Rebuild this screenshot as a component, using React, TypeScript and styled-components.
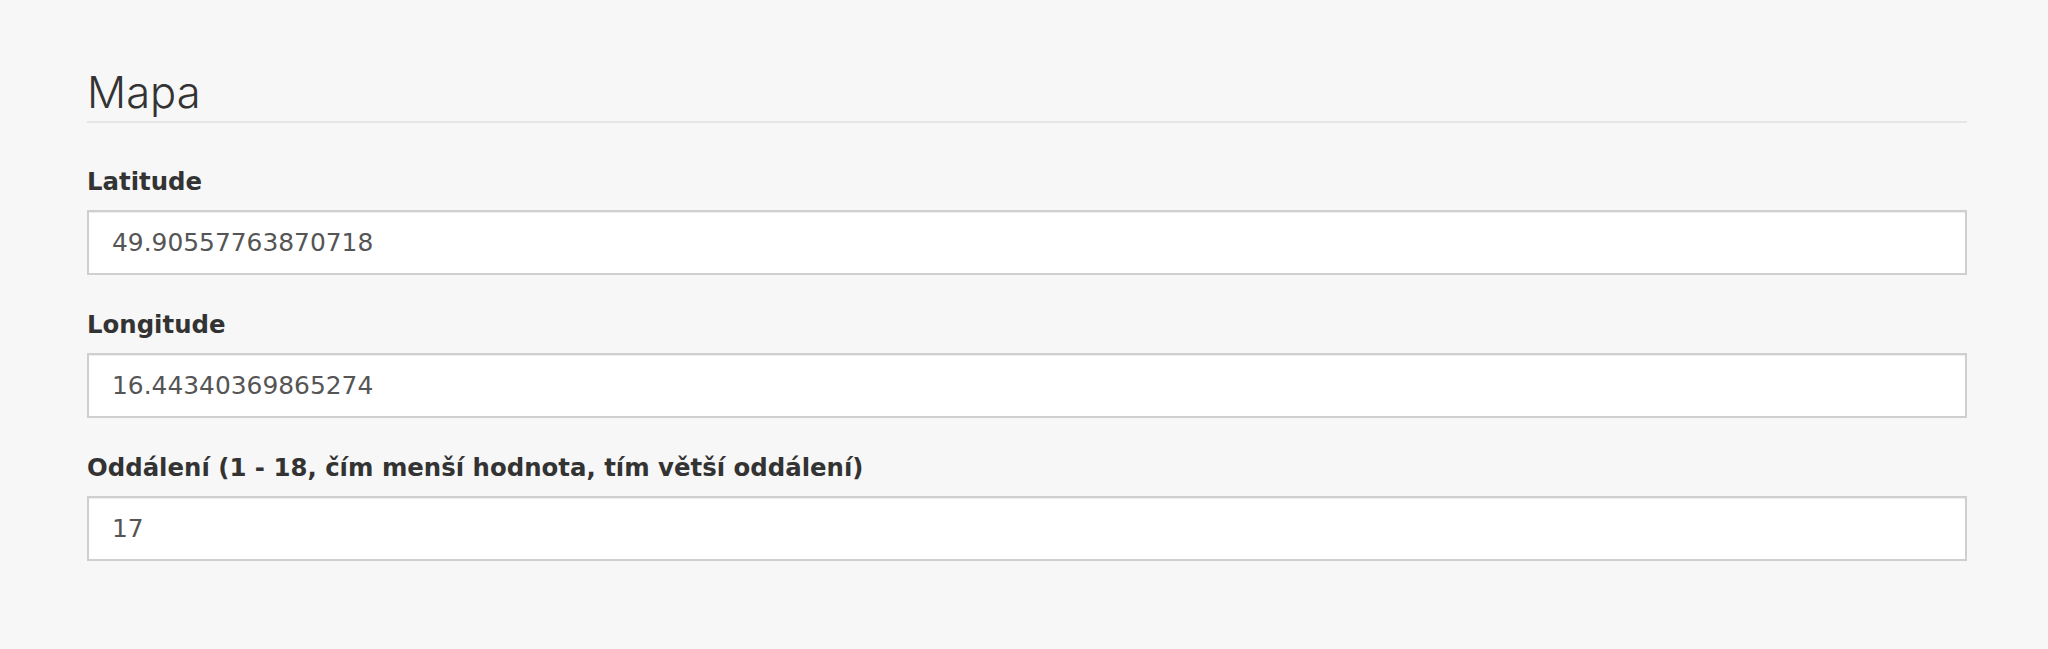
import React from 'react';
import styled, { createGlobalStyle } from 'styled-components';

const GlobalStyle = createGlobalStyle`
  html, body {
    margin: 0;
    padding: 0;
    background: #f7f7f7;
  }
  body {
    font-family: Inter, 'Noto Sans', sans-serif;
    color: #333;
  }
`;

const Page = styled.div`
  padding: 68px 81px 40px 87px;
`;

const SectionTitle = styled.h2`
  margin: 0 0 46px;
  padding-bottom: 5px;
  font-size: 43.5px;
  line-height: 48px;
  font-weight: 300;
  color: #333;
  border-bottom: 2px solid #e6e6e6;
`;

const Field = styled.div`
  display: flex;
  flex-direction: column;
  margin-bottom: 37px;
`;

const Label = styled.label`
  font-family: 'DejaVu Sans', sans-serif;
  font-size: 24.4px;
  line-height: 26px;
  font-weight: 700;
  color: #333;
  margin-bottom: 15px;
`;

const Input = styled.input`
  box-sizing: border-box;
  height: 65px;
  width: 100%;
  padding: 0 23px;
  border: 2px solid #cfcfcf;
  border-radius: 0;
  background: #fff;
  box-shadow: inset 0 1px 1px rgba(0, 0, 0, 0.075);
  font-family: 'DejaVu Sans', sans-serif;
  font-size: 24.9px;
  color: #555;
  outline: none;
`;

const fields = [
  { id: 'lat', label: 'Latitude', value: '49.90557763870718' },
  { id: 'lng', label: 'Longitude', value: '16.44340369865274' },
  { id: 'zoom', label: 'Oddálení (1 - 18, čím menší hodnota, tím větší oddálení)', value: '17' },
];

const App = () => {
  return (
    <>
      <GlobalStyle />
      <Page>
        <SectionTitle>Mapa</SectionTitle>
        {fields.map((f) => (
          <Field key={f.id}>
            <Label htmlFor={f.id}>{f.label}</Label>
            <Input id={f.id} type='text' defaultValue={f.value} />
          </Field>
        ))}
      </Page>
    </>
  );
};

export default App;
